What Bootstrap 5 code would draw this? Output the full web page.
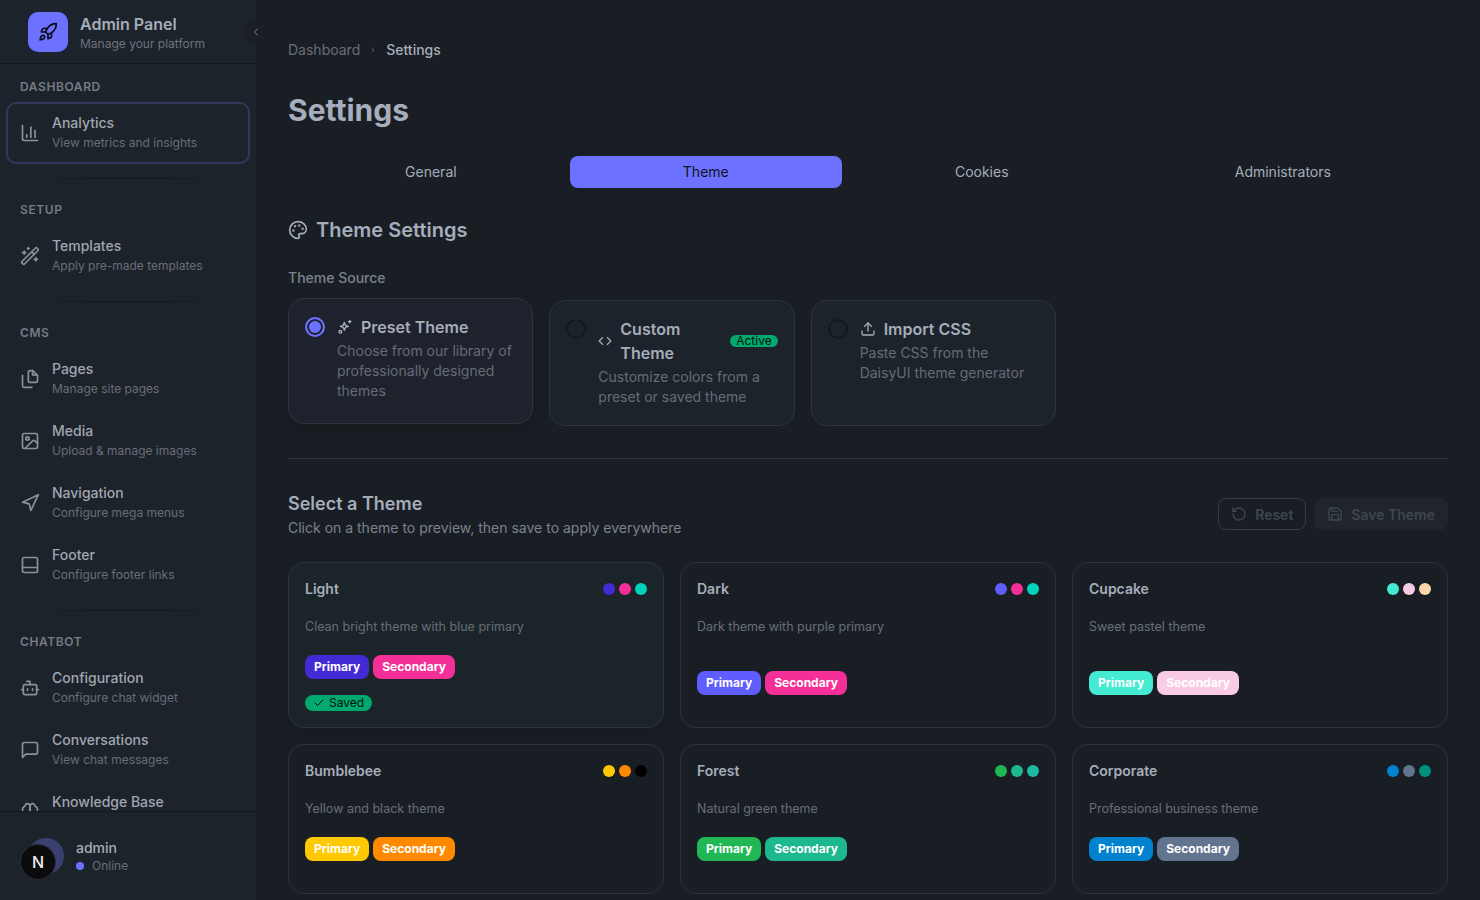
<!DOCTYPE html>
<html lang="en" data-bs-theme="dark">
<head>
<meta charset="utf-8">
<title>Settings</title>
<link href="https://cdn.jsdelivr.net/npm/bootstrap@5.3.0/dist/css/bootstrap.min.css" rel="stylesheet">
<style>
html,body{height:100%;}
body{font-family:Inter,"Liberation Sans",sans-serif;background:#191e24;color:#a6adbb;font-size:14px;overflow:hidden;}
svg.ico{fill:none;stroke:currentColor;stroke-width:2;stroke-linecap:round;stroke-linejoin:round;flex:none;display:block;}
.shell{height:900px;}
.side{width:256px;flex:none;background:#1d232a;height:900px;position:relative;z-index:2;}
.side-head{height:64px;padding:12px 28px;gap:12px;border-bottom:1px solid #15191e;}
.logo-box{width:40px;height:40px;border-radius:10px;background:#6c72ff;color:#0a0d14;}
.brand-name{font-size:16px;font-weight:600;line-height:24px;color:#a6adbb;}
.brand-sub{font-size:12px;line-height:16px;color:#6d737d;}
.collapse-btn{position:absolute;left:244px;top:20px;width:24px;height:24px;border-radius:50%;background:#191e24;color:#7b828c;}
.side-nav{flex:1 1 0;min-height:0;overflow:hidden;padding:0 6px;}
.group-label{font-size:12px;font-weight:600;letter-spacing:.6px;line-height:16px;color:#767c86;text-transform:uppercase;padding:15px 14px 7px;}
.nav-row{height:62px;padding:10px 12px;border:2px solid transparent;border-radius:10px;gap:12px;color:#8b919b;text-decoration:none;}
.nav-row.on{border-color:#32375c;}
.nav-title{font-size:14px;font-weight:500;line-height:20px;color:#a0a6b1;}
.nav-sub{font-size:12px;line-height:20px;color:#686e78;font-weight:400;}
.side-rule{height:1px;margin:14px 24px 8px;background:linear-gradient(90deg,transparent,#15191e 30%,#15191e 70%,transparent);}
.side-foot{height:89px;flex:none;border-top:1px solid #15191e;position:relative;padding:26px 76px;}
.avatar-disc{position:absolute;left:28px;top:26px;width:36px;height:36px;border-radius:50%;background:#3a4170;}
.next-mark{position:absolute;left:20px;top:32px;width:36px;height:36px;border-radius:50%;background:#0b0b0e;border:1px solid #2c2f33;color:#eee;font-size:16px;font-weight:500;}
.user-name{font-size:14px;font-weight:500;line-height:20px;color:#a6adbb;}
.user-state{font-size:12px;line-height:16px;color:#686e78;gap:8px;}
.state-dot{width:8px;height:8px;border-radius:50%;background:#6c72ff;}
.main-pane{flex:1 1 0;min-width:0;padding:40px 32px 0;}
.breadcrumb{margin:0 0 32px;line-height:20px;font-size:14px;}
.crumb-link{color:#686e78;}
.crumb-sep{color:#575d67;margin:0 9px;}
.crumb-now{color:#a6adbb;font-weight:500;}
.page-title{font-size:30px;font-weight:700;line-height:36px;color:#a6adbb;margin:0 0 24px;}
.tab-strip{padding:4px;height:40px;margin-bottom:24px;flex-wrap:nowrap;}
.tab-strip .nav-link{flex:1 1 auto;height:32px;padding:0 16px;line-height:32px;text-align:center;font-size:14px;color:#a6adbb;border-radius:8px;}
.tab-strip .nav-link.active{background:#6c72ff;color:#0f1220;}
.sec-head{font-size:20px;font-weight:600;line-height:28px;gap:8px;color:#a6adbb;margin:0 0 24px;}
.field-label{font-size:14px;font-weight:500;line-height:20px;color:#7c828c;margin-bottom:12px;}
.source-grid{display:grid;grid-template-columns:repeat(3,1fr);gap:16px;width:768px;}
.source-card{height:126px;padding:16px;background:#1d232a;border:1px solid #2e343b;border-radius:16px;gap:12px;}
.source-card.picked{background:#1e222d;transform:translateY(-2px);box-shadow:0 8px 16px rgba(0,0,0,.12);}
.source-radio{width:20px;height:20px;margin:2px 0 0;flex:none;border-radius:50%;background:transparent;border:2px solid #15191e;}
.source-radio.picked{border-color:#6c72ff;box-shadow:inset 0 0 0 2px #1e222d;background:#6c72ff;}
.source-title{font-size:16px;font-weight:600;line-height:24px;color:#a6adbb;gap:8px;}
.source-text{font-size:14px;line-height:20px;color:#666c76;margin-top:2px;}
.tag-active{background:#00a96e;color:#00100a;font-size:12px;font-weight:400;height:12px;line-height:12px;padding:0 6px;border-radius:999px;flex:none;}
.sep-line{height:1px;background:#2c3239;margin:32px 0 31px;}
.pick-head{font-size:18px;font-weight:600;line-height:28px;color:#a6adbb;}
.pick-sub{font-size:14px;line-height:20px;color:#7c828c;}
.ghost-btn{height:32px;font-size:14px;font-weight:600;gap:8px;border-radius:8px;color:#3f464f;padding:0 12px;display:flex;align-items:center;opacity:1;}
.ghost-line{border:1px solid #353b42;background:transparent;}
.ghost-fill{border:1px solid #1f252b;background:#1f252b;}
.theme-grid{display:grid;grid-template-columns:repeat(3,1fr);gap:16px;margin-top:24px;grid-template-rows:166px 150px;}
.theme-card{padding:16px;background:#191e24;border:1px solid #2c3337;border-radius:16px;color:#a6adbb;}
.theme-card.saved-one{background:#1a2429;border-color:#2b3536;box-shadow:0 4px 10px rgba(0,0,0,.12);}
.theme-name{font-size:14px;font-weight:600;line-height:20px;color:#a6adbb;}
.swatch{width:12px;height:12px;border-radius:50%;}
.theme-desc{font-size:12.5px;line-height:20px;color:#686e78;margin-top:18px;flex:1 1 auto;}
.pill-row{gap:4px;margin-top:18px;margin-bottom:16px;}
.chip{height:24px;line-height:24px;padding:0 9px;border-radius:8px;color:#fff;font-size:12px;font-weight:700;}
.saved-tag{height:16px;font-size:12px;line-height:16px;background:#00a96e;color:#00100a;border-radius:999px;padding:0 8px;gap:4px;align-self:flex-start;width:67px;}
</style>
</head>
<body>
<div class="shell d-flex">
<aside class="side d-flex flex-column">
  <div class="side-head d-flex align-items-center">
    <div class="logo-box d-flex align-items-center justify-content-center">
      <svg class="ico" width="20" height="20" viewBox="0 0 24 24"><path d="M4.5 16.5c-1.5 1.26-2 5-2 5s3.74-.5 5-2c.71-.84.7-2.13-.09-2.91a2.18 2.18 0 0 0-2.91-.09z"/><path d="m12 15-3-3a22 22 0 0 1 2-3.95A12.88 12.88 0 0 1 22 2c0 2.72-.78 7.5-6 11a22.35 22.35 0 0 1-4 2z"/><path d="M9 12H4s.55-3.03 2-4c1.62-1.08 5 0 5 0"/><path d="M12 15v5s3.03-.55 4-2c1.08-1.62 0-5 0-5"/></svg>
    </div>
    <div><div class="brand-name">Admin Panel</div><div class="brand-sub">Manage your platform</div></div>
  </div>
  <div class="collapse-btn d-flex align-items-center justify-content-center"><svg class="ico" width="12" height="12" viewBox="0 0 24 24"><path d="m15 18-6-6 6-6"/></svg></div>
  <nav class="side-nav">
    <div class="group-label">Dashboard</div>
    <a class="nav-row on d-flex align-items-center" href="#"><svg class="ico" width="20" height="20" viewBox="0 0 24 24" stroke-width="1.5"><path d="M3 3v16a2 2 0 0 0 2 2h16"/><path d="M18 17V9"/><path d="M13 17V5"/><path d="M8 17v-3"/></svg><div><div class="nav-title">Analytics</div><div class="nav-sub">View metrics and insights</div></div></a>
    <div class="side-rule"></div>
    <div class="group-label">Setup</div>
    <a class="nav-row d-flex align-items-center" href="#"><svg class="ico" width="20" height="20" viewBox="0 0 24 24"><path d="m21.64 3.64-1.28-1.28a1.21 1.21 0 0 0-1.72 0L2.36 18.64a1.21 1.21 0 0 0 0 1.72l1.28 1.28a1.2 1.2 0 0 0 1.72 0L21.64 5.36a1.2 1.2 0 0 0 0-1.72"/><path d="m14 7 3 3"/><path d="M5 6v4"/><path d="M19 14v4"/><path d="M10 2v2"/><path d="M7 8H3"/><path d="M21 16h-4"/><path d="M11 3H9"/></svg><div><div class="nav-title">Templates</div><div class="nav-sub">Apply pre-made templates</div></div></a>
    <div class="side-rule"></div>
    <div class="group-label">CMS</div>
    <a class="nav-row d-flex align-items-center" href="#"><svg class="ico" width="20" height="20" viewBox="0 0 24 24"><path d="M15.5 2H12a2 2 0 0 0-2 2v10a2 2 0 0 0 2 2h7a2 2 0 0 0 2-2V7.5L15.5 2z"/><path d="M3 7.6v12.8A1.6 1.6 0 0 0 4.6 22h9.8"/><path d="M15 2v5h5"/></svg><div><div class="nav-title">Pages</div><div class="nav-sub">Manage site pages</div></div></a>
    <a class="nav-row d-flex align-items-center" href="#"><svg class="ico" width="20" height="20" viewBox="0 0 24 24"><rect width="18" height="18" x="3" y="3" rx="2"/><circle cx="9" cy="9" r="2"/><path d="m21 15-3.086-3.086a2 2 0 0 0-2.828 0L6 21"/></svg><div><div class="nav-title">Media</div><div class="nav-sub">Upload &amp; manage images</div></div></a>
    <a class="nav-row d-flex align-items-center" href="#"><svg class="ico" width="20" height="20" viewBox="0 0 24 24"><polygon points="3 11 22 2 13 21 11 13 3 11"/></svg><div><div class="nav-title">Navigation</div><div class="nav-sub">Configure mega menus</div></div></a>
    <a class="nav-row d-flex align-items-center" href="#"><svg class="ico" width="20" height="20" viewBox="0 0 24 24"><rect width="18" height="18" x="3" y="3" rx="2"/><path d="M3 15h18"/></svg><div><div class="nav-title">Footer</div><div class="nav-sub">Configure footer links</div></div></a>
    <div class="side-rule"></div>
    <div class="group-label">Chatbot</div>
    <a class="nav-row d-flex align-items-center" href="#"><svg class="ico" width="20" height="20" viewBox="0 0 24 24"><path d="M12 8V4H8"/><rect width="16" height="12" x="4" y="8" rx="2"/><path d="M2 14h2"/><path d="M20 14h2"/><path d="M15 13v2"/><path d="M9 13v2"/></svg><div><div class="nav-title">Configuration</div><div class="nav-sub">Configure chat widget</div></div></a>
    <a class="nav-row d-flex align-items-center" href="#"><svg class="ico" width="20" height="20" viewBox="0 0 24 24"><path d="M21 15a2 2 0 0 1-2 2H7l-4 4V5a2 2 0 0 1 2-2h14a2 2 0 0 1 2 2z"/></svg><div><div class="nav-title">Conversations</div><div class="nav-sub">View chat messages</div></div></a>
    <a class="nav-row d-flex align-items-center" href="#"><svg class="ico" width="20" height="20" viewBox="0 0 24 24"><path d="M12 5a3 3 0 1 0-5.997.125 4 4 0 0 0-2.526 5.77 4 4 0 0 0 .556 6.588A4 4 0 1 0 12 18Z"/><path d="M12 5a3 3 0 1 1 5.997.125 4 4 0 0 1 2.526 5.77 4 4 0 0 1-.556 6.588A4 4 0 1 1 12 18Z"/><path d="M15 13a4.5 4.5 0 0 1-3-4 4.5 4.5 0 0 1-3 4"/><path d="M12 18V9"/></svg><div><div class="nav-title">Knowledge Base</div><div class="nav-sub">Train AI with content</div></div></a>
  </nav>
  <div class="side-foot">
    <div class="avatar-disc"></div>
    <div class="next-mark d-flex align-items-center justify-content-center">N</div>
    <div class="user-name">admin</div>
    <div class="user-state d-flex align-items-center"><span class="state-dot"></span>Online</div>
  </div>
</aside>
<main class="main-pane">
  <nav aria-label="breadcrumb"><div class="breadcrumb d-flex align-items-center"><span class="crumb-link">Dashboard</span><svg class="ico crumb-sep" width="8" height="8" viewBox="0 0 24 24"><path d="m9 18 6-6-6-6" stroke-width="3"/></svg><span class="crumb-now">Settings</span></div></nav>
  <h1 class="page-title">Settings</h1>
  <ul class="nav tab-strip">
    <li class="nav-link">General</li>
    <li class="nav-link active">Theme</li>
    <li class="nav-link">Cookies</li>
    <li class="nav-link">Administrators</li>
  </ul>
  <h2 class="sec-head d-flex align-items-center"><svg class="ico" width="20" height="20" viewBox="0 0 24 24"><circle cx="13.5" cy="6.5" r=".5" fill="currentColor"/><circle cx="17.5" cy="10.5" r=".5" fill="currentColor"/><circle cx="8.5" cy="7.5" r=".5" fill="currentColor"/><circle cx="6.5" cy="12.5" r=".5" fill="currentColor"/><path d="M12 2C6.5 2 2 6.5 2 12s4.5 10 10 10c.926 0 1.648-.746 1.648-1.688 0-.437-.18-.835-.437-1.125-.29-.289-.438-.652-.438-1.125a1.64 1.64 0 0 1 1.668-1.668h1.996c3.051 0 5.555-2.503 5.555-5.554C21.965 6.012 17.461 2 12 2z"/></svg>Theme Settings</h2>
  <div class="field-label">Theme Source</div>
  <div class="source-grid">
    <div class="source-card picked d-flex">
      <span class="source-radio picked"></span>
      <div><div class="source-title d-flex align-items-center"><svg class="ico" width="16" height="16" viewBox="0 0 24 24"><path d="M11 5l1.6 4.4L17 11l-4.4 1.6L11 17l-1.6-4.4L5 11l4.400-1.600z"/><path d="M19 2v4"/><path d="M21 4h-4"/><circle cx="5" cy="19" r="2"/></svg>Preset Theme</div>
      <div class="source-text">Choose from our library of professionally designed themes</div></div>
    </div>
    <div class="source-card d-flex">
      <span class="source-radio"></span>
      <div class="flex-grow-1"><div class="source-title d-flex align-items-center"><svg class="ico" width="14" height="14" viewBox="0 0 24 24"><polyline points="16 18 22 12 16 6"/><polyline points="8 6 2 12 8 18"/></svg><span style="width:80px">Custom Theme</span><span class="tag-active ms-auto">Active</span></div>
      <div class="source-text">Customize colors from a preset or saved theme</div></div>
    </div>
    <div class="source-card d-flex">
      <span class="source-radio"></span>
      <div><div class="source-title d-flex align-items-center"><svg class="ico" width="16" height="16" viewBox="0 0 24 24"><path d="M21 15v4a2 2 0 0 1-2 2H5a2 2 0 0 1-2-2v-4"/><polyline points="17 8 12 3 7 8"/><line x1="12" x2="12" y1="3" y2="15"/></svg>Import CSS</div>
      <div class="source-text">Paste CSS from the DaisyUI theme generator</div></div>
    </div>
  </div>
  <div class="sep-line"></div>
  <div class="d-flex justify-content-between align-items-center">
    <div><div class="pick-head">Select a Theme</div><div class="pick-sub">Click on a theme to preview, then save to apply everywhere</div></div>
    <div class="d-flex gap-2">
      <button type="button" class="btn ghost-btn ghost-line"><svg class="ico" width="16" height="16" viewBox="0 0 24 24"><path d="M3 12a9 9 0 1 0 9-9 9.75 9.75 0 0 0-6.74 2.74L3 8"/><path d="M3 3v5h5"/></svg>Reset</button>
      <button type="button" class="btn ghost-btn ghost-fill"><svg class="ico" width="16" height="16" viewBox="0 0 24 24"><path d="M15.2 3a2 2 0 0 1 1.4.6l3.800 3.800a2 2 0 0 1 .6 1.400V19a2 2 0 0 1-2 2H5a2 2 0 0 1-2-2V5a2 2 0 0 1 2-2z"/><path d="M17 21v-7a1 1 0 0 0-1-1H8a1 1 0 0 0-1 1v7"/><path d="M7 3v4a1 1 0 0 0 1 1h7"/></svg>Save Theme</button>
    </div>
  </div>
  <div class="theme-grid">
    <div class="theme-card saved-one d-flex flex-column">
      <div class="d-flex justify-content-between align-items-center"><span class="theme-name">Light</span><span class="d-flex gap-1"><i class="swatch" style="background:#422ad5"></i><i class="swatch" style="background:#f43098"></i><i class="swatch" style="background:#00d3bb"></i></span></div>
      <div class="theme-desc">Clean bright theme with blue primary</div>
      <div class="pill-row d-flex"><span class="chip" style="background:#422ad5">Primary</span><span class="chip" style="background:#f43098">Secondary</span></div>
      <span class="saved-tag d-flex align-items-center"><svg class="ico" width="12" height="12" viewBox="0 0 24 24"><path d="M20 6 9 17l-5-5"/></svg>Saved</span>
    </div>
    <div class="theme-card d-flex flex-column">
      <div class="d-flex justify-content-between align-items-center"><span class="theme-name">Dark</span><span class="d-flex gap-1"><i class="swatch" style="background:#605dff"></i><i class="swatch" style="background:#f43098"></i><i class="swatch" style="background:#00d3bb"></i></span></div>
      <div class="theme-desc">Dark theme with purple primary</div>
      <div class="pill-row d-flex"><span class="chip" style="background:#605dff">Primary</span><span class="chip" style="background:#f43098">Secondary</span></div>
    </div>
    <div class="theme-card d-flex flex-column">
      <div class="d-flex justify-content-between align-items-center"><span class="theme-name">Cupcake</span><span class="d-flex gap-1"><i class="swatch" style="background:#44ebd3"></i><i class="swatch" style="background:#f9cbe5"></i><i class="swatch" style="background:#ffd6a7"></i></span></div>
      <div class="theme-desc">Sweet pastel theme</div>
      <div class="pill-row d-flex"><span class="chip" style="background:#44ebd3">Primary</span><span class="chip" style="background:#f9cbe5">Secondary</span></div>
    </div>
    <div class="theme-card d-flex flex-column">
      <div class="d-flex justify-content-between align-items-center"><span class="theme-name">Bumblebee</span><span class="d-flex gap-1"><i class="swatch" style="background:#ffc800"></i><i class="swatch" style="background:#ff8a00"></i><i class="swatch" style="background:#000"></i></span></div>
      <div class="theme-desc">Yellow and black theme</div>
      <div class="pill-row d-flex"><span class="chip" style="background:#ffc800">Primary</span><span class="chip" style="background:#ff8a00">Secondary</span></div>
    </div>
    <div class="theme-card d-flex flex-column">
      <div class="d-flex justify-content-between align-items-center"><span class="theme-name">Forest</span><span class="d-flex gap-1"><i class="swatch" style="background:#1fb854"></i><i class="swatch" style="background:#1eb88e"></i><i class="swatch" style="background:#1fb8a0"></i></span></div>
      <div class="theme-desc">Natural green theme</div>
      <div class="pill-row d-flex"><span class="chip" style="background:#1fb854">Primary</span><span class="chip" style="background:#1eb88e">Secondary</span></div>
    </div>
    <div class="theme-card d-flex flex-column">
      <div class="d-flex justify-content-between align-items-center"><span class="theme-name">Corporate</span><span class="d-flex gap-1"><i class="swatch" style="background:#0082ce"></i><i class="swatch" style="background:#62748e"></i><i class="swatch" style="background:#00917c"></i></span></div>
      <div class="theme-desc">Professional business theme</div>
      <div class="pill-row d-flex"><span class="chip" style="background:#0082ce">Primary</span><span class="chip" style="background:#62748e">Secondary</span></div>
    </div>
  </div>
</main>
</div>
<script src="https://cdn.jsdelivr.net/npm/bootstrap@5.3.0/dist/js/bootstrap.bundle.min.js"></script>
</body>
</html>
